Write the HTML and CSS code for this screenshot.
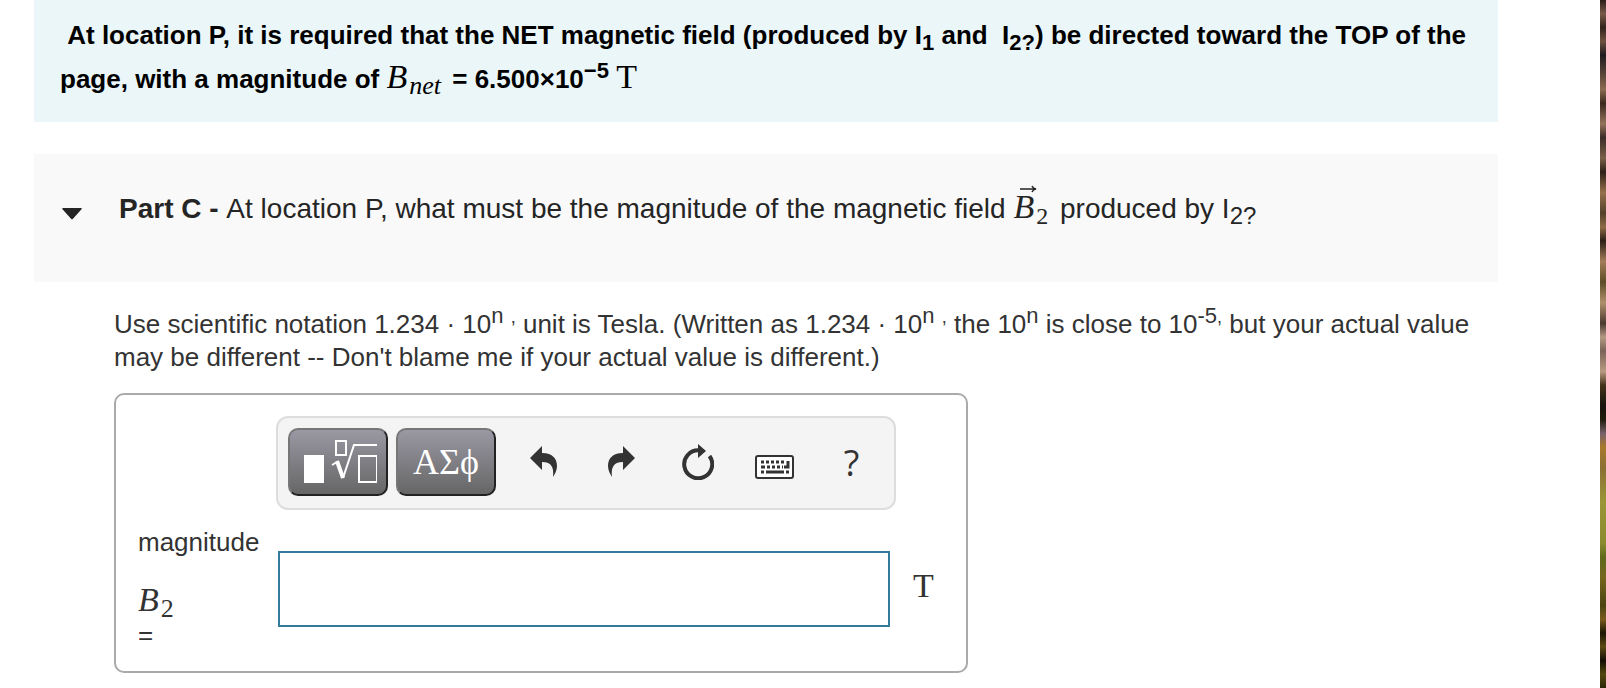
FILE: index.html
```html
<!DOCTYPE html>
<html lang="en">
<head>
    <meta charset="UTF-8">
    <meta name="viewport" content="width=device-width, initial-scale=1.0">
    <title>Part C - Magnetic Field</title>
    <link rel="stylesheet" href="styles.css">
</head>
<body>
    <main class="page">
        <div class="intro">
            &nbsp;At location P, it is required that the NET magnetic field (produced by I<sub>1</sub> and&nbsp; I<sub>2?</sub>) be directed toward the TOP of the page, with a magnitude of <span class="math"><i>B</i><sub><i>net</i></sub></span> = 6.500×10<sup>−5</sup> <span class="math">T</span>
        </div>

        <section class="part-header">
            <button type="button" class="toggle-btn" aria-label="Collapse Part C">
                <svg width="20" height="12" viewBox="0 0 20 12"><path d="M1 0h18q1.500 0 .5 1.200L11 10.800q-1 1-2 0L.5 1.200Q-.5 0 1 0z" fill="#252525"/></svg>
            </button>
            <h2 class="part-title"><b>Part C - </b>At location P, what must be the magnitude of the magnetic field <span class="math"><span class="vector"><i>B</i><svg class="vector-arrow" width="17" height="8" viewBox="0 0 17 8"><path d="M0 4h15M12 1q1 2.500 4 3q-3 .5-4 3" fill="none" stroke="#252525" stroke-width="1.500"/></svg></span><sub>2</sub></span> produced by I<sub>2?</sub></h2>
        </section>

        <section class="part-body">
            <p class="instructions">Use scientific notation 1.234 · 10<sup>n</sup> <sup class="comma">,</sup> unit is Tesla. (Written as 1.234 · 10<sup>n</sup> <sup class="comma">,</sup> the 10<sup>n</sup> is close to 10<sup>-5</sup><sup class="comma">,</sup> but your actual value may be different -- Don't blame me if your actual value is different.)</p>

            <form class="answer-box">
                <div class="toolbar">
                    <button type="button" class="palette-btn" aria-label="Templates">
                        <svg width="78" height="46" viewBox="0 0 78 46" fill="none" stroke="#fff">
                            <rect x="5" y="16" width="20" height="28" fill="#fff" stroke="none"/>
                            <rect x="37" y="2" width="10" height="14" stroke-width="2"/>
                            <path d="M33 26l5-3" stroke-width="2"/>
                            <path d="M38 22l6 17" stroke-width="4"/>
                            <path d="M44 39L55 6h24" stroke-width="2"/>
                            <rect x="60" y="17" width="18" height="26" stroke-width="2"/>
                        </svg>
                    </button>
                    <button type="button" class="palette-btn">ΑΣϕ</button>
                    <button type="button" class="icon-btn" aria-label="Undo">
                        <svg width="28" height="32" viewBox="0 0 28 32"><path d="M0 12L12 0v7c11 0 15 6 15 13 0 4-2 8-4 11 1-9-1-15-11-15v8z"/></svg>
                    </button>
                    <button type="button" class="icon-btn" aria-label="Redo">
                        <svg width="28" height="32" viewBox="0 0 28 32"><path d="M28 12L16 0v7C5 7 1 13 1 20c0 4 2 8 4 11-1-9 1-15 11-15v8z"/></svg>
                    </button>
                    <button type="button" class="icon-btn" aria-label="Reset">
                        <svg width="32" height="36" viewBox="0 0 32 36"><path d="M17 6.300A14 14 0 1 0 27.500 12" fill="none" stroke="#333" stroke-width="4"/><path d="M16 0l8 7-8 7z"/></svg>
                    </button>
                    <button type="button" class="icon-btn icon-keyboard" aria-label="Keyboard shortcuts">
                        <svg width="40" height="24" viewBox="0 0 40 24">
                            <rect x="1" y="1" width="37" height="22" rx="2" fill="#fff" stroke="#333" stroke-width="2"/>
                            <path d="M6 7h24M12 12h16M6 17h3M31 17h3" fill="none" stroke="#333" stroke-width="3" stroke-dasharray="3 2"/>
                            <path d="M6 12h4M11 17h18M33 6v6h-4" fill="none" stroke="#333" stroke-width="3"/>
                        </svg>
                    </button>
                    <button type="button" class="icon-btn help-btn" aria-label="Help">?</button>
                </div>

                <label for="magnitude" class="answer-label">
                    <span>magnitude</span>
                    <span class="math symbol"><i>B</i><sub>2</sub></span>
                    <span>=</span>
                </label>
                <input type="text" id="magnitude" name="magnitude" class="answer-input">
                <span class="math unit">T</span>
            </form>
        </section>
    </main>
    <div class="backdrop"></div>
</body>
</html>
```

FILE: styles.css
```css
body {
    display: flex;
    min-height: 100vh;
    margin: 0;
    font-family: "Liberation Sans", Arial, sans-serif;
    font-size: 26px;
    color: #333;
    background-color: white;
}
.page {
    flex: 1;
    padding: 0 102px 0 34px;
}
/* narrow slice of the desktop behind the page */
.backdrop {
    width: 6px;
    background: linear-gradient(#2a1c18, #7a5a48 2%, #33231c 4%, #6f5140 6%, #201a20 8%, #5d4838 11%, #8b6a50 13%, #3b291f 15%, #94725a 18%, #3a2c28 20%, #7a6048 23%, #2d2018 25%, #96704c 28%, #54402a 31%, #8f6a45 33%, #2b1f17 35%, #a37c58 38%, #5c4c26 41%, #b0906c 44%, #4a3930 47%, #b39a84 49%, #7a6357 51%, #b89a80 54%, #43331c 56%, #18130c 59%, #1f1c0c 61%, #77606a 63%, #a8792c 65%, #8a7034 68%, #9a9638 73%, #8a8a2e 79%, #5f6a1c 81%, #76661e 84%, #4b4412 88%, #7a5c1c 90%, #1c1606 92%, #5c4a14 94%, #120e04 96%, #54480f 98%, #2c2408);
}
sub, sup {
    position: relative;
    font-size: 22px;
    line-height: 0;
    vertical-align: baseline;
}
sub {
    top: 6px;
}
sup {
    bottom: 10px;
}
.math {
    font-family: "Liberation Serif", "Times New Roman", serif;
    font-size: 34px;
    font-weight: normal;
    line-height: 0;
}
.math sub {
    margin: 0 4px 0 2px;
    font-size: 26px;
    top: 6px;
}
.comma {
    font-size: 18px;
}
.intro {
    padding: 13px 26px 21px;
    font-weight: bold;
    line-height: 44px;
    color: black;
    background-color: #eaf6f8;
}
.part-header {
    display: flex;
    align-items: flex-start;
    gap: 37px;
    margin-top: 32px;
    padding: 39px 28px 57px;
    color: #252525;
    background-color: #f9f9f9;
}
.toggle-btn {
    display: flex;
    margin: 15px 0 0;
    padding: 0;
    border: none;
    background: none;
    cursor: pointer;
}
.part-title {
    margin: 0;
    font-size: 28px;
    font-weight: normal;
    line-height: 32px;
}
.part-title sub {
    font-size: 24px;
}
.vector {
    position: relative;
}
.vector-arrow {
    position: absolute;
    left: 7px;
    top: -3px;
}
.part-body {
    padding: 26px 26px 0 80px;
}
.instructions {
    margin: 0 0 19px;
    line-height: 33px;
}
.answer-box {
    display: grid;
    grid-template-columns: 138px 1fr 53px;
    row-gap: 16px;
    box-sizing: border-box;
    max-width: 854px;
    padding: 21px 0 19px 22px;
    border: 2px solid #aaa;
    border-radius: 10px;
}
.toolbar {
    grid-column: 1 / -1;
    display: flex;
    align-items: center;
    gap: 8px;
    margin: 0 70px 0 138px;
    padding: 10px 0 12px 10px;
    border: 2px solid #ddd;
    border-radius: 12px;
    background-color: #f4f4f4;
}
.palette-btn {
    display: flex;
    align-items: center;
    justify-content: center;
    box-sizing: border-box;
    width: 100px;
    height: 68px;
    padding: 0;
    border: 2px solid;
    border-color: #777 #222 #222 #777;
    border-radius: 10px;
    font-family: "Liberation Serif", serif;
    font-size: 36px;
    color: white;
    background: linear-gradient(#9a98a3, #666);
    cursor: pointer;
}
.icon-btn {
    display: flex;
    align-items: center;
    justify-content: center;
    width: 69px;
    height: 68px;
    padding: 0;
    border: none;
    background: none;
    fill: #333;
    cursor: pointer;
}
.palette-btn + .icon-btn {
    margin-left: 5px;
}
.icon-keyboard {
    padding-top: 10px;
}
.help-btn {
    font-family: "Open Sans", sans-serif;
    font-size: 36px;
    color: #333;
}
.answer-label {
    display: flex;
    flex-direction: column;
    line-height: 33px;
}
.symbol {
    padding-top: 22px;
    line-height: 38px;
}
.answer-input {
    box-sizing: border-box;
    height: 76px;
    margin: 25px 23px 0 2px;
    padding: 0 12px;
    border: 2px solid #337a9b;
    font-size: 26px;
}
.unit {
    margin-top: 25px;
    line-height: 70px;
}
```
